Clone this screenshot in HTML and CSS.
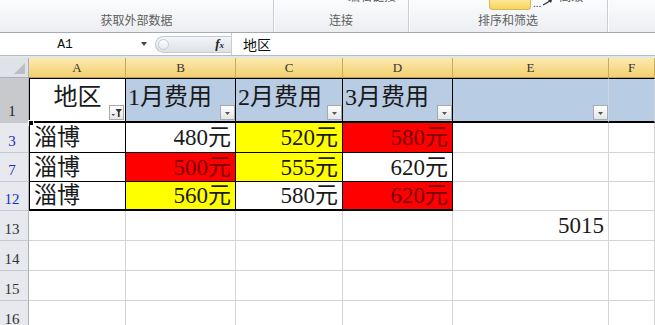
FILE: index.html
```html
<!DOCTYPE html>
<html lang="zh-CN">
<head>
    <meta charset="UTF-8">
    <title>Excel - 筛选</title>
    <link rel="stylesheet" href="styles.css">
</head>
<body>
    <div class="ribbon">
        <div class="group g1"><span class="label">获取外部数据</span></div>
        <div class="group g2">
            <div class="top"><span class="cut">编辑链接</span></div>
            <span class="label">连接</span>
        </div>
        <div class="group g3">
            <div class="top">
                <span class="btn-yellow"></span>
                <span class="dots">...</span>
                <svg class="adv" width="10" height="6" viewBox="0 0 10 6"><path d="M0 5 L7 1" stroke="#333" stroke-width="1.2"/><path d="M5 0 L9 0 L8 3 Z" fill="#333"/></svg>
                <span class="cut">高级</span>
            </div>
            <span class="label">排序和筛选</span>
        </div>
        <div class="group g4"></div>
    </div>

    <div class="fbar">
        <div class="namebox">
            <span class="ref">A1</span>
            <span class="caret"></span>
        </div>
        <div class="fpill">
            <span class="knob"></span>
            <span class="fx">f<span class="x">x</span></span>
        </div>
        <div class="finput">地区</div>
    </div>
    <div class="gap"></div>

    <div class="sheet">
        <!-- column headers -->
        <div class="corner"><span class="tri"></span></div>
        <div class="ch">A</div>
        <div class="ch">B</div>
        <div class="ch">C</div>
        <div class="ch">D</div>
        <div class="ch">E</div>
        <div class="ch">F</div>

        <!-- row 1 -->
        <div class="rh sel">1</div>
        <div class="c t first r1 center">地区
            <span class="fbtn">
                <svg width="13" height="13" viewBox="0 0 13 13"><path d="M1.5 8 L5 8 L3.2 10 Z" fill="#444"/><path d="M5.5 3 L12 3 L9.6 6 L9.6 11 L7.9 11 L7.9 6 Z" fill="#333"/></svg>
            </span>
            <span class="handle"></span>
        </div>
        <div class="c t r1 hdr">1月费用<span class="fbtn"><svg width="13" height="13" viewBox="0 0 13 13"><path d="M4 6 L9 6 L6.5 9 Z" fill="#555"/></svg></span></div>
        <div class="c t r1 hdr">2月费用<span class="fbtn"><svg width="13" height="13" viewBox="0 0 13 13"><path d="M4 6 L9 6 L6.5 9 Z" fill="#555"/></svg></span></div>
        <div class="c t r1 hdr">3月费用<span class="fbtn"><svg width="13" height="13" viewBox="0 0 13 13"><path d="M4 6 L9 6 L6.5 9 Z" fill="#555"/></svg></span></div>
        <div class="c r1 hdr soft"><span class="fbtn"><svg width="13" height="13" viewBox="0 0 13 13"><path d="M4 6 L9 6 L6.5 9 Z" fill="#555"/></svg></span></div>
        <div class="c r1 hdr soft"></div>

        <!-- row 3 -->
        <div class="rh filt">3</div>
        <div class="c t first">淄博</div>
        <div class="c t num">480元</div>
        <div class="c t num y">520元</div>
        <div class="c t num r">580元</div>
        <div class="c"></div>
        <div class="c"></div>

        <!-- row 7 -->
        <div class="rh filt">7</div>
        <div class="c t first">淄博</div>
        <div class="c t num r">500元</div>
        <div class="c t num y">555元</div>
        <div class="c t num">620元</div>
        <div class="c"></div>
        <div class="c"></div>

        <!-- row 12 -->
        <div class="rh filt">12</div>
        <div class="c t first last">淄博</div>
        <div class="c t num y last">560元</div>
        <div class="c t num last">580元</div>
        <div class="c t num r last">620元</div>
        <div class="c"></div>
        <div class="c"></div>

        <!-- row 13 -->
        <div class="rh">13</div>
        <div class="c"></div>
        <div class="c"></div>
        <div class="c"></div>
        <div class="c"></div>
        <div class="c num">5015</div>
        <div class="c"></div>

        <!-- row 14 -->
        <div class="rh">14</div>
        <div class="c"></div>
        <div class="c"></div>
        <div class="c"></div>
        <div class="c"></div>
        <div class="c"></div>
        <div class="c"></div>

        <!-- row 15 -->
        <div class="rh">15</div>
        <div class="c"></div>
        <div class="c"></div>
        <div class="c"></div>
        <div class="c"></div>
        <div class="c"></div>
        <div class="c"></div>

        <!-- row 16 -->
        <div class="rh">16</div>
        <div class="c"></div>
        <div class="c"></div>
        <div class="c"></div>
        <div class="c"></div>
        <div class="c"></div>
        <div class="c"></div>
    </div>
</body>
</html>
```

FILE: styles.css
```css
* {
    box-sizing: border-box;
}
body {
    margin: 0;
    width: 655px;
    height: 325px;
    overflow: hidden;
    background: #fff;
    font-family: "Noto Sans CJK SC", sans-serif;
}

/* ribbon */
.ribbon {
    display: flex;
    height: 33px;
    background: linear-gradient(#fbfcfd, #eceef2);
    border-bottom: 1px solid #a3abb6;
    overflow: hidden;
}
.group {
    display: flex;
    flex-direction: column;
    justify-content: space-between;
    align-items: center;
    border-right: 1px solid #c9ced6;
    box-shadow: 1px 0 0 #fff;
}
.g1 { width: 274px; justify-content: flex-end; }
.g2 { width: 135px; }
.g3 { width: 199px; }
.g4 { flex: 1; border-right: none; box-shadow: none; }
.label {
    font-size: 12px;
    line-height: 14px;
    color: #5e5e5e;
    padding-bottom: 5px;
}
.top {
    display: flex;
    align-items: flex-start;
    height: 10px;
    width: 100%;
}
.cut {
    font-size: 12px;
    line-height: 12px;
    color: #555;
    margin-top: -10px;
}
.g2 .top {
    justify-content: flex-end;
    padding-right: 12px;
}
.g3 .top {
    padding-left: 80px;
}
.btn-yellow {
    width: 42px;
    height: 10px;
    background: linear-gradient(#fde993, #f8d35c);
    border: 1px solid #d9b45a;
    border-top: none;
    border-radius: 0 0 4px 4px;
}
.dots {
    font-size: 10px;
    line-height: 6px;
    margin-left: 2px;
    color: #333;
}
.adv {
    margin: 0 6px 0 2px;
}

/* formula bar */
.fbar {
    display: flex;
    align-items: center;
    height: 23px;
    border-bottom: 1px solid #b4bcc6;
    background: #fff;
}
.namebox {
    display: flex;
    align-items: center;
    width: 153px;
}
.ref {
    width: 130px;
    text-align: center;
    font-family: "Liberation Mono", monospace;
    font-size: 13px;
    color: #111;
}
.caret {
    margin-left: 11px;
    border-left: 3.5px solid transparent;
    border-right: 3.5px solid transparent;
    border-top: 4px solid #444;
}
.fpill {
    display: flex;
    align-items: center;
    justify-content: space-between;
    width: 76px;
    height: 17px;
    margin-left: 2px;
    padding: 0 7px 0 2px;
    border: 1px solid #c3c9d1;
    border-right: none;
    border-radius: 9px 0 0 9px;
    background: linear-gradient(#f3f5f8, #dde1e7);
}
.knob {
    width: 11px;
    height: 11px;
    border-radius: 50%;
    border: 1px solid #c7ccd3;
    background: linear-gradient(#ffffff, #e6e9ee);
}
.fx {
    font-family: "Liberation Serif", serif;
    font-style: italic;
    font-weight: bold;
    font-size: 13px;
    color: #222;
}
.fx .x {
    font-size: 9px;
}
.finput {
    flex: 1;
    height: 100%;
    display: flex;
    align-items: center;
    padding-left: 11px;
    border-left: 1px solid #c7ccd3;
    font-size: 14px;
    color: #111;
}
.gap {
    height: 2px;
    background: #e3e6eb;
}

/* sheet */
.sheet {
    display: grid;
    grid-template-columns: 29px 97px 110px 107px 110px 156px 1fr;
    grid-template-rows: 20px 45px 30px 29px 29px 30px 30px 30px 30px;
}
.corner {
    position: relative;
    background: #dfe2e7;
    border-right: 1px solid #a9b0ba;
    border-bottom: 1px solid #a9b0ba;
}
.tri {
    position: absolute;
    right: 3px;
    bottom: 3px;
    border-left: 11px solid transparent;
    border-bottom: 11px solid #b9bec6;
}
.ch {
    display: flex;
    align-items: center;
    justify-content: center;
    background: linear-gradient(#fbeab0, #f3d070);
    border-right: 1px solid #c9ab5c;
    border-bottom: 1px solid #b8a064;
    font-family: "Liberation Serif", serif;
    font-size: 13px;
    color: #333;
}
.rh {
    display: flex;
    align-items: flex-end;
    justify-content: center;
    padding: 0 4px 3px 0;
    background: #e7e9ee;
    border-right: 1px solid #a9b0ba;
    border-bottom: 1px solid #c5cad2;
    font-family: "Liberation Serif", serif;
    font-size: 15px;
    line-height: 1;
    color: #333;
}
.rh.sel {
    background: #c8c9cc;
    color: #222;
}
.rh.filt {
    color: #1c2fb8;
}
.c {
    position: relative;
    display: flex;
    align-items: center;
    padding: 0 4px;
    border-right: 1px solid #d4d4d4;
    border-bottom: 1px solid #d4d4d4;
    font-family: "Liberation Serif", "Noto Sans CJK SC", serif;
    font-size: 23px;
    line-height: 1;
    color: #1a1a1a;
    white-space: nowrap;
}
.c.t {
    border-right-color: #000;
    border-bottom-color: #000;
}
.c.first {
    border-left: 1px solid #000;
}
.c.r1 {
    border-top: 1px solid #000;
    border-bottom: 2px solid #000;
    padding-bottom: 6px;
    font-size: 24px;
}
.c.center {
    justify-content: center;
}
.c.hdr {
    background: #b8cce4;
    padding-left: 2px;
}
.c.soft {
    border-right-color: #cdd6e3;
}
.c.last {
    border-bottom: 2px solid #000;
}
.c.num {
    justify-content: flex-end;
}
.c.y {
    background: #ffff00;
}
.c.r {
    background: #ff0000;
    color: #7a0000;
}
.fbtn {
    position: absolute;
    right: 0;
    bottom: 1px;
    width: 15px;
    height: 15px;
    border: 1px solid #a7abb0;
    background: linear-gradient(#ffffff, #e3e5e8);
    display: flex;
}
.c.center .fbtn {
    right: 1px;
}
.handle {
    position: absolute;
    left: -2px;
    bottom: -5px;
    width: 6px;
    height: 6px;
    background: #000;
    border: 1px solid #fff;
}
```
